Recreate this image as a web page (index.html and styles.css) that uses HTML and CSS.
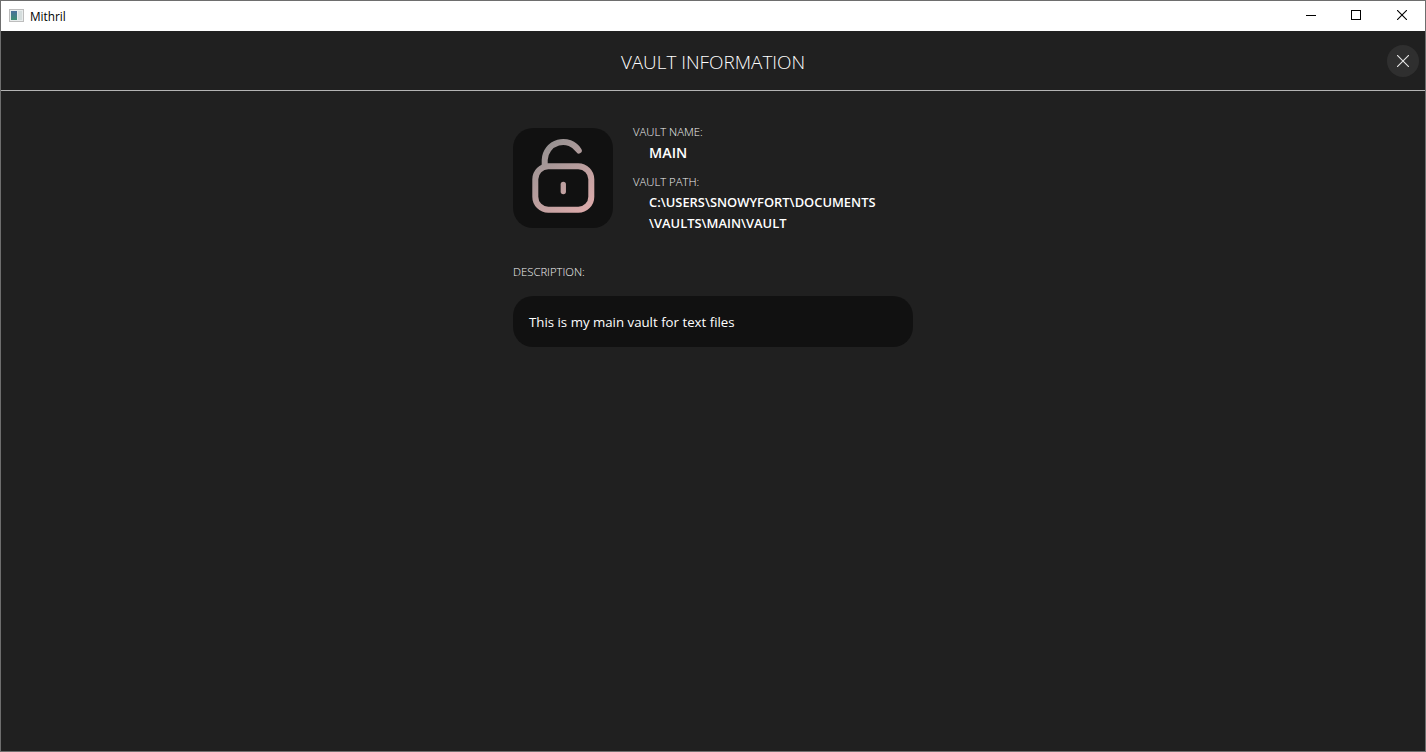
FILE: index.html
```html
<!DOCTYPE html>
<html lang="en">
<head>
    <meta charset="UTF-8">
    <title>Mithril</title>
    <link rel="stylesheet" href="styles.css">
</head>
<body>

<div class="window">
    <div class="titlebar">
        <svg class="app-icon" width="16" height="16" viewBox="0 0 16 16">
            <defs>
                <linearGradient id="appGrad" x1="0" y1="0" x2="0" y2="1">
                    <stop offset="0" stop-color="#4a6f9c"/>
                    <stop offset="1" stop-color="#3f8f72"/>
                </linearGradient>
            </defs>
            <rect x="0.5" y="1.5" width="14" height="12" fill="#e9eded" stroke="#bdbdbd"/>
            <rect x="2" y="3" width="6" height="9" fill="url(#appGrad)"/>
            <rect x="9" y="3" width="4" height="9" fill="#d5dddd"/>
        </svg>
        <span class="app-name">Mithril</span>
        <div class="win-controls">
            <div class="win-btn win-btn-min">
                <svg width="10" height="10" viewBox="0 0 10 10"><path d="M0 5.5H10" stroke="#000" fill="none"/></svg>
            </div>
            <div class="win-btn">
                <svg width="10" height="10" viewBox="0 0 10 10"><rect x="0.5" y="0.5" width="9" height="9" stroke="#000" fill="none"/></svg>
            </div>
            <div class="win-btn">
                <svg width="10" height="10" viewBox="0 0 10 10"><path d="M0 0L10 10M10 0L0 10" stroke="#000" stroke-width="1.1" fill="none"/></svg>
            </div>
        </div>
    </div>

    <div class="page">
        <div class="page-header">
            <h1>VAULT INFORMATION</h1>
            <div class="close-btn">
                <svg width="12" height="12" viewBox="0 0 12 12"><path d="M0 0L12 12M12 0L0 12" stroke="#e6e6e6" stroke-width="1.1" fill="none"/></svg>
            </div>
        </div>

        <div class="content">
            <div class="vault-top">
                <div class="vault-icon">
                    <svg width="100" height="100" viewBox="0 0 100 100">
                        <defs>
                            <linearGradient id="lockGrad" gradientUnits="userSpaceOnUse" x1="25" y1="15" x2="78" y2="85">
                                <stop offset="0" stop-color="#929090"/>
                                <stop offset="1" stop-color="#dfabab"/>
                            </linearGradient>
                        </defs>
                        <rect x="22.300" y="38.300" width="56" height="43.400" rx="13" fill="none" stroke="url(#lockGrad)" stroke-width="6"/>
                        <path d="M31.700 37V32A18.500 18.500 0 0 1 65.800 22.500" fill="none" stroke="url(#lockGrad)" stroke-width="6" stroke-linecap="round"/>
                        <path d="M50.300 56.500V63.500" fill="none" stroke="url(#lockGrad)" stroke-width="5.300" stroke-linecap="round"/>
                    </svg>
                </div>
                <div class="vault-fields">
                    <div class="field-label">VAULT NAME:</div>
                    <div class="field-value name-value">MAIN</div>
                    <div class="field-label path-label">VAULT PATH:</div>
                    <div class="field-value">C:\USERS\SNOWYFORT\DOCUMENTS<br>\VAULTS\MAIN\VAULT</div>
                </div>
            </div>

            <div class="field-label desc-label">DESCRIPTION:</div>
            <div class="desc-box">This is my main vault for text files</div>
        </div>
    </div>
</div>

</body>
</html>
```

FILE: styles.css
```css
html, body {
    margin: 0;
    height: 100%;
}
body {
    font-family: "Open Sans", "Noto Sans", sans-serif;
    background-color: #202020;
    overflow: hidden;
}
.window {
    height: 100vh;
    box-sizing: border-box;
    border: 1px solid #6e6e6e;
    display: flex;
    flex-direction: column;
}
.titlebar {
    height: 30px;
    flex-shrink: 0;
    background: #fff;
    display: flex;
    align-items: center;
    padding-left: 8px;
}
.app-icon {
    margin-right: 5px;
}
.app-name {
    font-size: 11.800px;
    color: #000;
}
.win-controls {
    margin-left: auto;
    display: flex;
}
.win-btn {
    width: 46px;
    height: 30px;
    box-sizing: border-box;
    padding-bottom: 2px;
    display: flex;
    align-items: center;
    justify-content: center;
}
.win-btn-min {
    width: 44px;
}
.page {
    flex: 1;
    background: #202020;
    color: #fff;
}
.page-header {
    position: relative;
    height: 59px;
    border-bottom: 1px solid #b4b4b4;
    display: flex;
    align-items: center;
    justify-content: center;
}
h1 {
    margin: 2px 0 0;
    font-size: 18.900px;
    font-weight: 300;
    color: #fff;
}
.close-btn {
    position: absolute;
    top: 14px;
    right: 6px;
    width: 32px;
    height: 32px;
    border-radius: 50%;
    background: #2f2f2f;
    display: flex;
    align-items: center;
    justify-content: center;
}
.content {
    width: 400px;
    margin: 37px auto 0;
}
.vault-top {
    display: flex;
}
.vault-icon {
    width: 100px;
    height: 100px;
    border-radius: 20px;
    background: #111;
    margin-right: 20px;
}
.vault-icon svg {
    display: block;
}
.field-label {
    font-size: 11.300px;
    font-weight: 340;
    line-height: 8px;
    color: #f4f4f4;
}
.field-value {
    font-size: 12.900px;
    font-weight: 600;
    line-height: 21px;
    padding-left: 16px;
    margin-top: 6px;
}
.name-value {
    font-size: 14.300px;
}
.path-label {
    margin-top: 15px;
}
.desc-label {
    margin-top: 34px;
}
.desc-box {
    margin-top: 20px;
    height: 51px;
    box-sizing: border-box;
    padding: 0 16px;
    border-radius: 20px;
    background: #111;
    font-size: 13.250px;
    line-height: 53px;
}
```
